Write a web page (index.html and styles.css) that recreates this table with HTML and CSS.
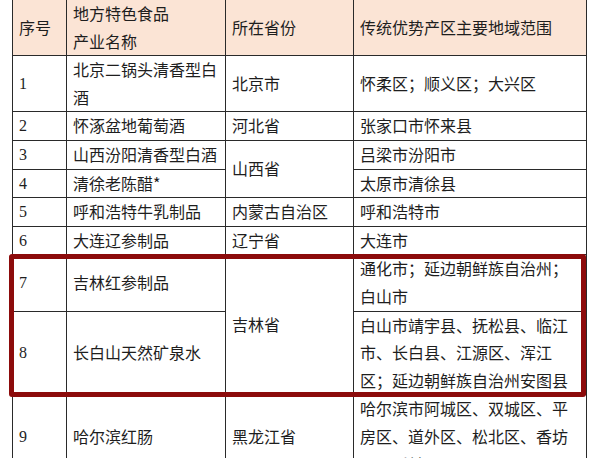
FILE: index.html
```html
<!DOCTYPE html>
<html lang="zh">
<head>
<meta charset="utf-8">
<link rel="stylesheet" href="styles.css">
</head>
<body>
<div class="wrap">
<table class="tbl">
<colgroup>
<col class="c1"><col class="c2"><col class="c3"><col class="c4">
</colgroup>
<thead>
<tr><th>序号</th><th>地方特色食品<br>产业名称</th><th>所在省份</th><th>传统优势产区主要地域范围</th></tr>
</thead>
<tbody>
<tr><td class="num">1</td><td>北京二锅头清香型白酒</td><td>北京市</td><td>怀柔区；顺义区；大兴区</td></tr>
<tr><td class="num">2</td><td>怀涿盆地葡萄酒</td><td>河北省</td><td>张家口市怀来县</td></tr>
<tr><td class="num">3</td><td>山西汾阳清香型白酒</td><td rowspan="2">山西省</td><td>吕梁市汾阳市</td></tr>
<tr><td class="num">4</td><td>清徐老陈醋*</td><td>太原市清徐县</td></tr>
<tr><td class="num">5</td><td>呼和浩特牛乳制品</td><td>内蒙古自治区</td><td>呼和浩特市</td></tr>
<tr><td class="num">6</td><td>大连辽参制品</td><td>辽宁省</td><td>大连市</td></tr>
<tr><td class="num">7</td><td>吉林红参制品</td><td rowspan="2">吉林省</td><td>通化市；延边朝鲜族自治州；白山市</td></tr>
<tr><td class="num">8</td><td>长白山天然矿泉水</td><td>白山市靖宇县、抚松县、临江市、长白县、江源区、浑江区；延边朝鲜族自治州安图县</td></tr>
<tr><td class="num">9</td><td>哈尔滨红肠</td><td>黑龙江省</td><td>哈尔滨市阿城区、双城区、平房区、道外区、松北区、香坊区、呼兰区</td></tr>
</tbody>
</table>
<div class="mark"></div>
</div>
</body>
</html>
```

FILE: styles.css
```css
html, body {
  margin: 0;
  padding: 0;
  background: #ffffff;
}
.wrap {
  position: relative;
  width: 600px;
  height: 458px;
  overflow: hidden;
}
.tbl {
  margin-left: 12px;
  width: 574px;
  table-layout: fixed;
  border-collapse: collapse;
  font-family: "Noto Sans CJK SC", "Noto Sans", sans-serif;
  font-size: 16px;
  line-height: 27.6px;
  color: #1e1e1e;
}
.c1 { width: 54px; }
.c2 { width: 159px; }
.c3 { width: 128px; }
.c4 { width: 233px; }
.tbl th, .tbl td {
  border: 1px solid #2a2a2a;
  padding: 0 6px;
  text-align: left;
  vertical-align: middle;
  font-weight: normal;
}
.tbl th {
  background: #fbe4d5;
  border-top: none;
}
.tbl .num {
  font-family: "Liberation Serif", serif;
  font-size: 16px;
}
.mark {
  position: absolute;
  left: 9px;
  top: 254px;
  width: 577px;
  height: 143px;
  box-sizing: border-box;
  border: 5px solid #8c0b0b;
  border-radius: 3px;
  pointer-events: none;
}
```
